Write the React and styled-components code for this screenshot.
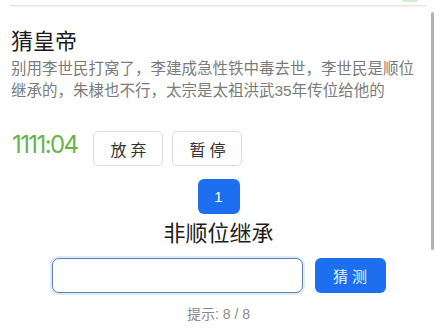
import React from "react";
import styled, { createGlobalStyle } from "styled-components";

const GlobalStyle = createGlobalStyle`
  html, body {
    margin: 0;
    padding: 0;
    background: #fff;
    overflow: hidden;
  }
  body {
    font-family: "Liberation Sans", "Noto Sans CJK SC", sans-serif;
  }
`;

const Page = styled.div`
  position: relative;
  width: 437px;
  height: 330px;
`;

const PrevCard = styled.div`
  position: relative;
  height: 5px;
  margin: 0 11px 0 10px;
  border-bottom: 1px solid #e4e4e4;
  box-shadow: 0 1px 2px rgba(0, 0, 0, 0.06);
`;

const GreenTip = styled.div`
  position: absolute;
  right: 8px;
  top: 0;
  width: 16px;
  height: 2px;
  border-radius: 0 0 6px 6px;
  background: #d6eed0;
`;

const Main = styled.div`
  padding: 0 17px 0 11px;
`;

const Title = styled.h1`
  margin: 21px 0 0;
  font-size: 22px;
  line-height: 30px;
  font-weight: 400;
  color: #1c1c1c;
`;

const Desc = styled.p`
  margin: 1px 0 0;
  font-size: 15.5px;
  line-height: 22px;
  color: #7b7b7b;
`;

const TimerRow = styled.div`
  display: flex;
  align-items: flex-start;
  margin-top: 29px;
`;

const Timer = styled.span`
  margin: 2px 16px 0 1px;
  font-family: Inter, "Liberation Sans", sans-serif;
  font-size: 24px;
  line-height: 24px;
  letter-spacing: -1.6px;
  color: #69b347;
`;

const GhostButton = styled.button`
  width: 70px;
  height: 35px;
  margin-right: 9px;
  padding: 0 0 0 4px;
  border: 1px solid #dcdcdc;
  border-radius: 5px;
  background: #fff;
  font-family: "Noto Sans CJK SC", sans-serif;
  font-size: 16px;
  letter-spacing: 4px;
  color: #333;
`;

const Center = styled.div`
  display: flex;
  flex-direction: column;
  align-items: center;
  margin-top: 13px;
`;

const PageBadge = styled.div`
  width: 42px;
  height: 35px;
  border-radius: 6px;
  background: #1d6ff0;
  color: #fff;
  font-size: 15px;
  display: flex;
  align-items: center;
  justify-content: center;
`;

const Answer = styled.div`
  margin-top: 2px;
  font-family: "Noto Sans CJK SC", sans-serif;
  font-size: 22px;
  line-height: 30px;
  color: #1c1c1c;
`;

const GuessRow = styled.div`
  display: flex;
  gap: 12px;
  margin-top: 12px;
`;

const Input = styled.input`
  box-sizing: border-box;
  width: 251px;
  height: 35px;
  border: 1.5px solid #6482a8;
  border-radius: 7px;
  box-shadow: 0 0 0 2px #dbeaff;
  outline: none;
  background: #fff;
`;

const GuessButton = styled.button`
  width: 71px;
  height: 35px;
  padding: 0 0 0 4px;
  border: none;
  border-radius: 6px;
  background: #1d6ff0;
  color: #eef4ff;
  font-family: "Noto Sans CJK SC", sans-serif;
  font-size: 15px;
  letter-spacing: 4px;
`;

const Hint = styled.div`
  margin-top: 11px;
  font-size: 14px;
  line-height: 20px;
  color: #8a8a8a;
`;

const ScrollThumb = styled.div`
  position: absolute;
  top: 12px;
  right: 3px;
  width: 3px;
  height: 238px;
  border-radius: 2px;
  background: #b2b2b2;
`;

export default function App() {
  return (
    <Page>
      <GlobalStyle />
      <PrevCard>
        <GreenTip />
      </PrevCard>
      <Main>
        <Title>猜皇帝</Title>
        <Desc>
          别用李世民打窝了，李建成急性铁中毒去世，李世民是顺位继承的，朱棣也不行，太宗是太祖洪武35年传位给他的
        </Desc>
        <TimerRow>
          <Timer>1111:04</Timer>
          <GhostButton>放弃</GhostButton>
          <GhostButton>暂停</GhostButton>
        </TimerRow>
      </Main>
      <Center>
        <PageBadge>1</PageBadge>
        <Answer>非顺位继承</Answer>
        <GuessRow>
          <Input />
          <GuessButton>猜测</GuessButton>
        </GuessRow>
        <Hint>提示: 8 / 8</Hint>
      </Center>
      <ScrollThumb />
    </Page>
  );
}
